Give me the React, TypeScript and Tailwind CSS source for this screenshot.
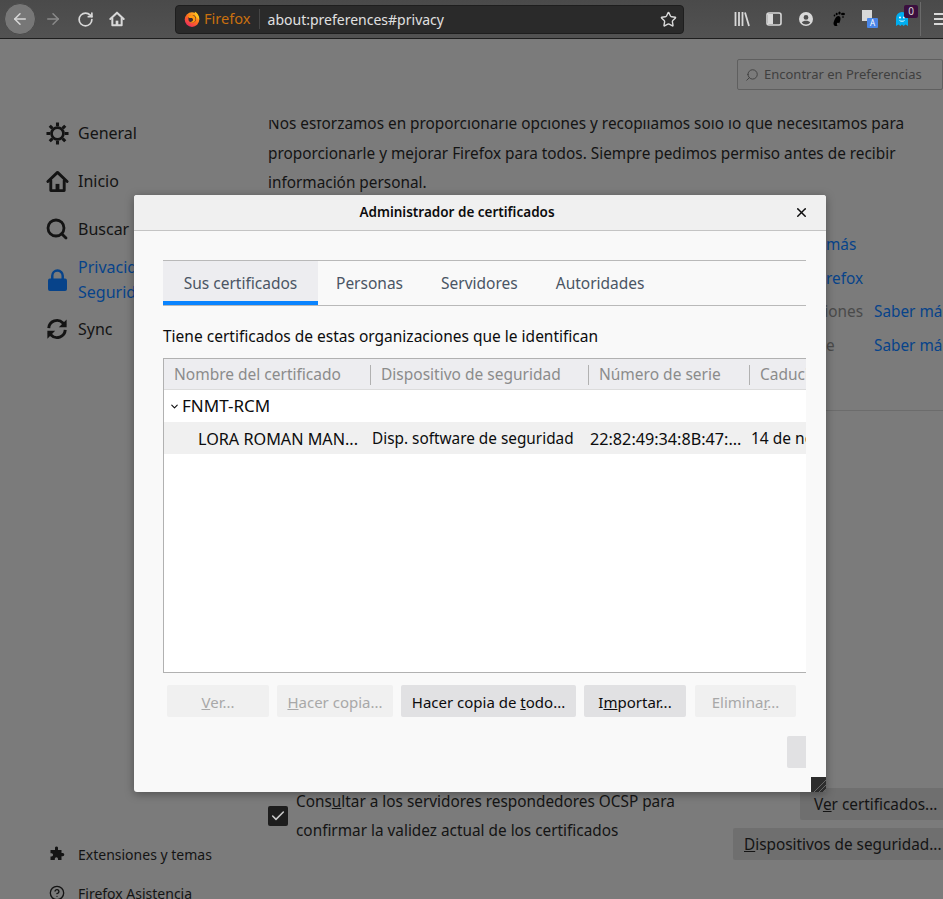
import React from "react";
import { ArrowLeft, ArrowRight, RotateCw, Star, Search, X, Check, ChevronDown, CircleHelp } from "lucide-react";

const font = { fontFamily: '"Noto Sans", "Open Sans", sans-serif' };

function HomeIcon({ className }: { className?: string }) {
  return (
    <svg viewBox="0 0 24 24" className={className} fill="none" stroke="currentColor" strokeWidth="3" strokeLinejoin="round" strokeLinecap="round">
      <path d="M2 12 12 2.5 22 12" />
      <path d="M5 11v10.5h14V11" />
      <rect x="10" y="14.5" width="4" height="7" fill="currentColor" stroke="none" />
    </svg>
  );
}

function GearIcon({ className }: { className?: string }) {
  return (
    <svg viewBox="0 0 24 24" className={className} fill="none" stroke="currentColor">
      <circle cx="12" cy="12" r="6.2" strokeWidth="2.8" />
      <g strokeWidth="3.2" strokeLinecap="butt">
        <path d="M12 .5v4M12 19.5v4M.5 12h4M19.5 12h4M3.9 3.9 6.7 6.7M17.3 17.3l2.8 2.8M3.9 20.1l2.8-2.8M17.3 6.7l2.8-2.8" />
      </g>
    </svg>
  );
}

function LockIcon({ className }: { className?: string }) {
  return (
    <svg viewBox="0 0 20 24" className={className} fill="currentColor">
      <path d="M2 10h16a2 2 0 0 1 2 2v9a2 2 0 0 1-2 2H2a2 2 0 0 1-2-2v-9a2 2 0 0 1 2-2z" />
      <path d="M4.5 11V7a5.5 5.5 0 0 1 11 0v4" fill="none" stroke="currentColor" strokeWidth="2.6" />
    </svg>
  );
}

function SyncIcon({ className }: { className?: string }) {
  return (
    <svg viewBox="0 0 24 24" className={className} fill="none" stroke="currentColor" strokeWidth="3.2">
      <path d="M3 11a9 9 0 0 1 15.5-5.5L21 8" />
      <path d="M21 13a9 9 0 0 1-15.5 5.5L3 16" />
      <path d="M22.5 1.5V10h-8.5z" fill="currentColor" stroke="none" />
      <path d="M1.5 22.5V14H10z" fill="currentColor" stroke="none" />
    </svg>
  );
}

function PuzzleIcon({ className }: { className?: string }) {
  return (
    <svg viewBox="0 0 16 16" className={className} fill="currentColor">
      <path d="M6 1.5a1.6 1.6 0 0 1 3 0V4h3.5v3h1.2a1.6 1.6 0 0 1 0 3.2h-1.2V14H9v-1.2a1.6 1.6 0 0 0-3.2 0V14H1.5v-3.6h1a1.6 1.6 0 0 0 0-3.2h-1V4H6z" />
    </svg>
  );
}

function FirefoxLogo() {
  return (
    <svg viewBox="0 0 16 16" className="w-4 h-4 shrink-0">
      <defs>
        <linearGradient id="fx" x1="0.85" y1="0" x2="0.15" y2="1">
          <stop offset="0" stopColor="#ffc21f" />
          <stop offset="0.5" stopColor="#ff6a20" />
          <stop offset="1" stopColor="#e8206a" />
        </linearGradient>
      </defs>
      <circle cx="8" cy="8.6" r="7.3" fill="url(#fx)" />
      <path d="M10.8 .4c3 1.8 4.8 4.8 4.4 8.2L11.5 5.5z" fill="#ffc21f" />
      <circle cx="8.2" cy="7.8" r="3.8" fill="#3a2a33" />
      <path d="M4.2 5.2C6.4 3.4 9.6 3.8 11 6c1 1.6.7 3.8-.9 5-1.4 1-3.2.9-4.4 0 1.9.3 3.2-.7 3.3-2.2.1-1-.8-1.7-1.9-1.7H5.2z" fill="#ff980e" />
    </svg>
  );
}

function Toolbar() {
  return (
    <div className="h-[39px] flex items-center bg-[linear-gradient(#4a4a4a,#525252)] border-b border-[#1e1e1e] pl-1 text-[#d8d8d8]">
      <div className="w-8 h-8 shrink-0 rounded-full bg-[#777777] border border-[#4a4a4a] flex items-center justify-center">
        <ArrowLeft size={18} strokeWidth={2} />
      </div>
      <ArrowRight size={18} strokeWidth={2} className="ml-[8px] shrink-0 text-[#8a8a8a]" />
      <RotateCw size={17} strokeWidth={2.4} className="ml-[15px] shrink-0" />
      <HomeIcon className="w-4 h-4 ml-[15px] shrink-0" />
      <div className="ml-[50px] w-[509px] h-[29px] shrink-0 rounded-[4px] bg-[#2a2a2a] border border-[#1e1e1e] flex items-center pl-[8px] pr-[6px]">
        <FirefoxLogo />
        <span className="ml-[4px] text-[14.6px] text-[#c9700f]">Firefox</span>
        <span className="ml-[8px] w-px h-[20px] bg-[#454545]" />
        <span className="ml-[8px] text-[14px] text-[#e0e0e0]">about:preferences#privacy</span>
        <Star size={17} strokeWidth={2} className="ml-auto" />
      </div>
      <div className="ml-[50px] flex items-center">
        <svg viewBox="0 0 16 16" className="w-4 h-4 shrink-0" fill="none" stroke="currentColor" strokeWidth="1.8">
          <path d="M1.5 1v14M5 1v14M8.5 1v14M11 1.5l4 13.5" />
        </svg>
        <svg viewBox="0 0 16 16" className="w-4 h-4 ml-[16px] shrink-0" fill="none" stroke="currentColor" strokeWidth="1.6">
          <rect x="1" y="2" width="14" height="12" rx="2" />
          <rect x="2" y="3" width="5" height="10" fill="currentColor" stroke="none" />
        </svg>
        <svg viewBox="0 0 16 16" className="w-4 h-4 ml-[16px] shrink-0" fill="currentColor">
          <path fillRule="evenodd" d="M8 1a7 7 0 1 0 0 14A7 7 0 0 0 8 1zm0 3a2.4 2.4 0 1 1 0 4.8A2.4 2.4 0 0 1 8 4zm0 9.4c-1.8 0-3.3-.8-4.2-2 .6-1 2.4-1.6 4.2-1.6s3.6.6 4.2 1.6c-.9 1.2-2.4 2-4.2 2z" />
        </svg>
        <svg viewBox="0 0 16 16" className="w-4 h-4 ml-[16px] shrink-0" fill="#000000">
          <path d="M5.5 7C7 3.8 11 4.4 10.5 8.2 10.2 11 8.8 13.6 6.7 15 4.6 15.5 3 13.6 3.6 11.4 4 9.8 4.8 8.4 5.5 7z" />
          <circle cx="8" cy="13" r="1.2" fill="#525252" />
          <ellipse cx="13" cy="3" rx="2" ry="1.3" />
          <ellipse cx="9.5" cy="2" rx="1.2" ry="1.5" />
          <ellipse cx="6.7" cy="3" rx="1" ry="1.3" />
          <ellipse cx="4.5" cy="4.6" rx=".8" ry="1" />
          <ellipse cx="13" cy="6" rx="1" ry=".8" />
        </svg>
        <div className="relative w-4 h-4 ml-[16px] shrink-0">
          <span className="absolute left-0 top-[-1px] w-[10px] h-[11px] bg-[#d8d8d8]" />
          <span className="absolute right-0 bottom-[-1px] w-[11px] h-[10px] rounded-[1px] bg-[#4a86e8] text-white text-[8px] leading-[10px] text-center">A</span>
        </div>
        <div className="relative w-4 h-4 ml-[16px] shrink-0">
          <svg viewBox="0 0 16 16" className="w-4 h-4" fill="#00aef0">
            <path d="M2 15V7a6 6 0 0 1 12 0v8l-2.4-1.6L9.4 15 8 13.6 6.4 15 4.4 13.4z" />
            <circle cx="6" cy="6.5" r="1" fill="#ffffff" />
            <circle cx="10" cy="6.5" r="1" fill="#ffffff" />
            <path d="M5.5 9.5c1.2 1 3.8 1 5 0" fill="none" stroke="#ffffff" strokeWidth=".9" />
          </svg>
          <span className="absolute left-[10px] top-[-6px] w-[14px] h-[13px] rounded-[2px] bg-[#3b0f3f] text-[#d8d8d8] text-[10px] leading-[13px] text-center">0</span>
        </div>
        <span className="ml-[10px] w-px h-[34px] shrink-0 bg-[#6a6a6a]" />
        <svg viewBox="0 0 16 16" className="w-4 h-4 ml-[13px] shrink-0" fill="none" stroke="currentColor" strokeWidth="2">
          <path d="M0 3h16M0 8h16M0 13h16" />
        </svg>
      </div>
    </div>
  );
}

function SideItem({ icon, children, className }: { icon: React.ReactNode; children: React.ReactNode; className?: string }) {
  return (
    <div className={`flex items-center ${className ?? ""}`}>
      <span className="w-[24px] h-[24px] flex items-center justify-center shrink-0">{icon}</span>
      <span className="ml-[9px]">{children}</span>
    </div>
  );
}

function Sidebar() {
  return (
    <div className="w-[268px] shrink-0 pl-[45px] pt-[82px] text-[16px] text-[#141414]">
      <SideItem icon={<GearIcon className="w-[23px] h-[23px]" />} className="h-[24px]">General</SideItem>
      <SideItem icon={<HomeIcon className="w-[23px] h-[23px]" />} className="h-[24px] mt-[24px]">Inicio</SideItem>
      <SideItem icon={<Search size={24} strokeWidth={2.8} />} className="h-[24px] mt-[24px]">Buscar</SideItem>
      <SideItem icon={<LockIcon className="w-[19px] h-[23px] text-[#07438a]" />} className="mt-[14px] text-[#07438a]">
        <span className="block leading-[25px]">Privacidad y</span>
        <span className="block leading-[25px]">Seguridad</span>
      </SideItem>
      <SideItem icon={<SyncIcon className="w-[22px] h-[22px]" />} className="h-[24px] mt-[12px]">Sync</SideItem>
      <div className="mt-[501px] text-[14px]">
        <SideItem icon={<PuzzleIcon className="w-[16px] h-[16px]" />} className="h-[24px]">Extensiones y temas</SideItem>
        <SideItem icon={<CircleHelp size={16} strokeWidth={2} />} className="h-[24px] mt-[15px]">Firefox Asistencia</SideItem>
      </div>
    </div>
  );
}

function MainBehind() {
  const learn = "text-[#07438a]";
  return (
    <div className="flex-1 min-w-0 text-[15.35px] text-[#141414] whitespace-nowrap">
      <div className="h-[81px] flex justify-end items-start pt-[20px]">
        <div className="w-[206px] h-[31px] rounded-[2px] border border-[#5f5f5f] flex items-center pl-[7px] text-[13px] text-[#3f3f3f]">
          <Search size={14} strokeWidth={1.6} className="-scale-x-100" />
          <span className="ml-[5px]">Encontrar en Preferencias</span>
        </div>
      </div>
      <div className="h-[76.5px] overflow-hidden">
        <div className="-mt-[11px] leading-[29.5px]">
          <p>Nos esforzamos en proporcionarle opciones y recopilamos solo lo que necesitamos para</p>
          <p>proporcionarle y mejorar Firefox para todos. Siempre pedimos permiso antes de recibir</p>
          <p>información personal.</p>
        </div>
      </div>
      <div className="pl-[558px] leading-[34px] mt-[30.5px]">
        <div className={learn}>más</div>
        <div className={learn}>refox</div>
        <div className="flex -mt-px">
          <span className="w-[37px] shrink-0 flex justify-end text-[#4a4a4a]">iones</span>
          <span className={`ml-[11px] ${learn}`}>Saber más</span>
        </div>
        <div className="flex">
          <span className="w-[37px] shrink-0 text-[#4a4a4a]">e</span>
          <span className={`ml-[11px] ${learn}`}>Saber más</span>
        </div>
      </div>
      <div className="ml-[558px] mt-[48px] h-px bg-[#6c6c6c]" />
      <div className="flex mt-[375.5px] justify-between items-start">
        <div className="flex items-center">
          <span className="w-[20px] h-[20px] rounded-[2px] bg-[#1d1d1d] flex items-center justify-center text-[#c8c8c8]">
            <Check size={16} strokeWidth={2.4} />
          </span>
          <div className="ml-[8px] leading-[29px]">
            <p>Cons<span className="underline">u</span>ltar a los servidores respondedores OCSP para</p>
            <p>confirmar la validez actual de los certificados</p>
          </div>
        </div>
        <div className="flex flex-col items-end gap-2 mt-[1.5px] w-[210px] shrink-0 -ml-[210px]">
          <div className="w-[143px] h-8 pl-[14px] pt-[2px] flex items-center rounded-l-[2px] bg-[#6f6f6f]">
            <span>V<span className="underline">e</span>r certificados...</span>
          </div>
          <div className="w-[210px] h-8 pl-[11px] pt-[2px] flex items-center rounded-l-[2px] bg-[#6f6f6f]">
            <span><span className="underline">D</span>ispositivos de seguridad...</span>
          </div>
        </div>
      </div>
    </div>
  );
}

function DialogButton({ children, disabled, className }: { children?: React.ReactNode; disabled?: boolean; className?: string }) {
  return (
    <div className={`h-8 pt-[2px] rounded-[2px] text-[15px] flex items-center justify-center shrink-0 ${disabled ? "bg-[#f0f0f0] text-[#a8a8a8]" : "bg-[#e1e1e3] text-[#0c0c0d]"} ${className ?? ""}`}>
      <span>{children}</span>
    </div>
  );
}

function CertDialog() {
  return (
    <div className="absolute left-[134px] top-[195px] w-[692px] h-[597px] rounded-[3px] bg-[#f9f9f9] shadow-[0_2px_10px_rgba(0,0,0,0.35)] text-[15.5px] text-[#0c0c0d] overflow-hidden">
      <div className="h-[36px] bg-[#f0f0f0] border-b border-[#c4c4c4] relative flex items-center justify-center pr-[46px] text-[13.5px] font-semibold">
        Administrador de certificados
        <X size={15} strokeWidth={2.4} className="absolute right-[17px] top-[10px]" />
      </div>
      <div className="pl-[29px] pr-[20px] pt-[29px]">
        <div className="h-[46px] border-y border-[#b9b9b9] flex text-[#4a5564]">
          <div className="w-[155px] h-[44px] pt-[5px] bg-[#ededf0] border-b-[4px] border-[#0a84ff] flex items-center justify-center">Sus certificados</div>
          <div className="ml-[18px] h-[44px] pt-[2px] flex items-center">Personas</div>
          <div className="ml-[38px] h-[44px] pt-[2px] flex items-center">Servidores</div>
          <div className="ml-[38px] h-[44px] pt-[2px] flex items-center">Autoridades</div>
        </div>
        <p className="mt-[19px] leading-[22px]">Tiene certificados de estas organizaciones que le identifican</p>
        <div className="mt-[11px] h-[315px] border-l border-y border-[#b1b1b1] bg-white overflow-hidden whitespace-nowrap">
          <div className="h-[31px] pt-[2px] bg-[#ededf0] border-b border-[#dcdcdc] flex items-center text-[#8b8b8b]">
            <span className="w-[206px] shrink-0 pl-[10px]">Nombre del certificado</span>
            <span className="w-px h-[20px] shrink-0 bg-[#b1b1b1]" />
            <span className="w-[217px] shrink-0 pl-[10px]">Dispositivo de seguridad</span>
            <span className="w-px h-[20px] shrink-0 bg-[#b1b1b1]" />
            <span className="w-[160px] shrink-0 pl-[10px]">Número de serie</span>
            <span className="w-px h-[20px] shrink-0 bg-[#b1b1b1]" />
            <span className="pl-[10px] shrink-0">Caducidad</span>
          </div>
          <div className="h-[32px] flex items-center pl-[5px]">
            <ChevronDown size={11} strokeWidth={2.4} />
            <span className="ml-[2px] text-[17px]">FNMT-RCM</span>
          </div>
          <div className="h-[32px] pt-[2px] bg-[#f0f0f0] flex items-center">
            <span className="w-[208px] shrink-0 pl-[34px] text-[16.2px]">LORA ROMAN MAN...</span>
            <span className="w-[218px] shrink-0 text-[15.35px]">Disp. software de seguridad</span>
            <span className="w-[161px] shrink-0 text-[16.2px]">22:82:49:34:8B:47:...</span>
            <span className="shrink-0">14 de noviembre</span>
          </div>
        </div>
        <div className="mt-[12px] pl-[4px] flex gap-2">
          <DialogButton disabled className="w-[102px]"><span className="underline">V</span>er...</DialogButton>
          <DialogButton disabled className="w-[116px]"><span className="underline">H</span>acer copia...</DialogButton>
          <DialogButton className="w-[175px]">Hacer copia de <span className="underline">t</span>odo...</DialogButton>
          <DialogButton className="w-[102px]">I<span className="underline">m</span>portar...</DialogButton>
          <DialogButton disabled className="w-[101px] ml-px">Elimina<span className="underline">r</span>...</DialogButton>
        </div>
        <div className="mt-[19px] flex justify-end">
          <DialogButton className="w-[19px] rounded-r-none" />
        </div>
      </div>
      <svg viewBox="0 0 15 15" className="absolute right-0 bottom-0 w-[15px] h-[15px]">
        <rect width="15" height="15" fill="#2c2c2c" />
        <path d="M3 15 15 3M8 15l7-7M12 15l3-3" stroke="#666666" strokeWidth="1" />
      </svg>
    </div>
  );
}

export default function App() {
  return (
    <div className="relative w-[943px] h-[899px] overflow-hidden bg-[#7b7b7b]" style={font}>
      <Toolbar />
      <div className="flex">
        <Sidebar />
        <MainBehind />
      </div>
      <CertDialog />
    </div>
  );
}
